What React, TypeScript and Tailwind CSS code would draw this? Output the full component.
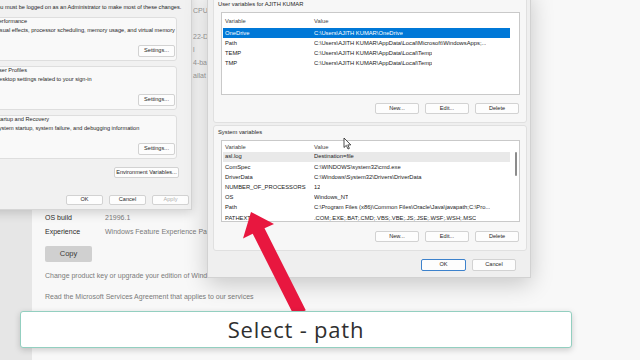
import type { ReactNode } from "react";

const USER_VARS = [
  ["OneDrive", "C:\\Users\\AJITH KUMAR\\OneDrive"],
  ["Path", "C:\\Users\\AJITH KUMAR\\AppData\\Local\\Microsoft\\WindowsApps;..."],
  ["TEMP", "C:\\Users\\AJITH KUMAR\\AppData\\Local\\Temp"],
  ["TMP", "C:\\Users\\AJITH KUMAR\\AppData\\Local\\Temp"],
];

const SYSTEM_VARS = [
  ["asl.log", "Destination=file"],
  ["ComSpec", "C:\\WINDOWS\\system32\\cmd.exe"],
  ["DriverData", "C:\\Windows\\System32\\Drivers\\DriverData"],
  ["NUMBER_OF_PROCESSORS", "12"],
  ["OS", "Windows_NT"],
  ["Path", "C:\\Program Files (x86)\\Common Files\\Oracle\\Java\\javapath;C:\\Pro..."],
  ["PATHEXT", ".COM;.EXE;.BAT;.CMD;.VBS;.VBE;.JS;.JSE;.WSF;.WSH;.MSC"],
];

function WinButton({
  className = "",
  primary = false,
  disabled = false,
  children,
}: {
  className?: string;
  primary?: boolean;
  disabled?: boolean;
  children: ReactNode;
}) {
  return (
    <div
      className={`flex shrink-0 items-center justify-center rounded-[2px] border bg-[#fdfdfd] text-[5.6px] leading-none ${
        primary ? "border-[#3d82cc]" : "border-[#d2d2d2]"
      } ${disabled ? "text-[#b0b0b0]" : "text-[#1f1f1f]"} ${className}`}
    >
      {children}
    </div>
  );
}

function GroupBox({ title, desc }: { title: string; desc: string }) {
  return (
    <div className="ml-[5px] flex h-[44px] w-[187px] flex-col rounded-[3px] border border-[#dedede] bg-[#f9f9f9] pl-[4px] pr-[1px]">
      <div className="h-[6px] whitespace-nowrap text-[5.6px] leading-[6px] text-[#1f1f1f]">{title}</div>
      <div className="mt-[3px] h-[7px] whitespace-nowrap text-[5.6px] leading-[7px] text-[#1f1f1f]">{desc}</div>
      <div className="mt-[11px] flex justify-end">
        <WinButton className="h-[12px] w-[37px]">Settings...</WinButton>
      </div>
    </div>
  );
}

function VarList({
  rows,
  headerClass,
  heightClass,
  selected,
  focused,
  scrollbar,
}: {
  rows: string[][];
  headerClass: string;
  heightClass: string;
  selected: number;
  focused: boolean;
  scrollbar: boolean;
}) {
  return (
    <div className={`ml-[7px] flex w-[299px] overflow-hidden border border-[#c9c9c9] bg-white pl-[1px] pt-[2px] ${heightClass}`}>
      <div className="flex w-[287px] flex-col">
        <div className={`flex items-center pl-[2px] text-[5.8px] text-[#444] ${headerClass}`}>
          <div className="w-[89px]">Variable</div>
          <div>Value</div>
        </div>
        {rows.map(([name, value], i) => (
          <div
            key={name + i}
            className={`flex h-[10.2px] shrink-0 items-center whitespace-nowrap pl-[2px] text-[5.8px] ${
              i === selected
                ? focused
                  ? "bg-[#0078d7] text-white"
                  : "bg-[#e9e9e9] text-[#1a1a1a]"
                : "text-[#1a1a1a]"
            }`}
          >
            <div className="w-[89px] shrink-0">{name}</div>
            <div className="overflow-hidden">{value}</div>
          </div>
        ))}
      </div>
      {scrollbar && (
        <div className="pl-[5px] pt-[9px]">
          <div className="h-[24px] w-[2px] rounded-full bg-[#8c8c8c]" />
        </div>
      )}
    </div>
  );
}

function ListButtons() {
  return (
    <div className="flex justify-end gap-[6px] pr-[7px]">
      <WinButton className="h-[11px] w-[44px]">New...</WinButton>
      <WinButton className="h-[11px] w-[44px]">Edit...</WinButton>
      <WinButton className="h-[11px] w-[44px]">Delete</WinButton>
    </div>
  );
}

export default function App() {
  return (
    <div className="relative flex h-[360px] w-[640px] overflow-hidden bg-[#fbfbfb] font-['Liberation_Sans',Arial,sans-serif]">
      {/* settings page behind the dialogs */}
      <div className="w-[32px] shrink-0 bg-[#e6e6e6]" />
      <div className="flex flex-1 flex-col bg-[#f8f8f8] pl-[13px] pt-[4px]">
        <div className="ml-[148px] flex flex-col text-[7px] leading-[13px] text-[#9a9a9a]">
          <div className="h-[13px]">CPU</div>
          <div className="h-[13px]" />
          <div className="h-[13px]">22-D</div>
          <div className="h-[13px]">l</div>
          <div className="h-[13px]">4-ba</div>
          <div className="h-[13px]">ailat</div>
        </div>
        <div className="mt-[129px] flex flex-col text-[7px]">
          <div className="flex h-[14px] items-center">
            <div className="w-[60px] text-[#2b2b2b]">OS build</div>
            <div className="text-[#7a7a7a]">21996.1</div>
          </div>
          <div className="flex h-[14px] items-center">
            <div className="w-[60px] text-[#2b2b2b]">Experience</div>
            <div className="whitespace-nowrap text-[#7a7a7a]">Windows Feature Experience Pack 321.14700.0.3</div>
          </div>
        </div>
        <div className="mt-[7px] flex h-[16px] w-[47px] items-center justify-center rounded-[2px] bg-[#d0d0d0] text-[7.5px] text-[#3a3a3a]">
          Copy
        </div>
        <div className="mt-[9px] h-[10px] whitespace-nowrap text-[7px] leading-[10px] text-[#7a7a7a]">
          Change product key or upgrade your edition of Windows
        </div>
        <div className="mt-[11px] h-[10px] whitespace-nowrap text-[7px] leading-[10px] text-[#7a7a7a]">
          Read the Microsoft Services Agreement that applies to our services
        </div>
      </div>

      {/* System Properties window */}
      <div className="absolute left-[-16px] top-[-10px] flex h-[220px] w-[208px] flex-col border border-[#d6d6d6] bg-[#f1f1f1] shadow-[0_3px_10px_rgba(0,0,0,0.16)]">
        <div className="mt-[12px] h-[8px] whitespace-nowrap pl-[9px] text-[5.6px] leading-[8px] text-[#1f1f1f]">
          You must be logged on as an Administrator to make most of these changes.
        </div>
        <div className="mt-[6px] flex flex-col gap-[5px]">
          <GroupBox title="Performance" desc="Visual effects, processor scheduling, memory usage, and virtual memory" />
          <GroupBox title="User Profiles" desc="Desktop settings related to your sign-in" />
          <GroupBox title="Startup and Recovery" desc="System startup, system failure, and debugging information" />
        </div>
        <div className="mt-[8px] flex justify-end pr-[12px]">
          <WinButton className="h-[11px] w-[65px]">Environment Variables...</WinButton>
        </div>
        <div className="mt-auto flex h-[22px] items-start justify-end gap-[6px] pr-[2px] pt-[8px]">
          <WinButton className="h-[10px] w-[37px]">OK</WinButton>
          <WinButton className="h-[10px] w-[37px]">Cancel</WinButton>
          <WinButton className="h-[10px] w-[37px]" disabled>
            Apply
          </WinButton>
        </div>
      </div>

      {/* Environment Variables window */}
      <div className="absolute left-[207px] top-[-10px] flex h-[288px] w-[324px] flex-col border border-[#d2d2d2] bg-[#efefef] shadow-[0_6px_22px_rgba(0,0,0,0.2)]">
        <div className="ml-[5px] mt-[3px] flex w-[314px] flex-col rounded-[3px] border border-[#e0e0e0] bg-[#f7f7f7] pb-[8px] pt-[5px]">
          <div className="h-[8px] pl-[4px] text-[5.8px] leading-[8px] text-[#1f1f1f]">User variables for AJITH KUMAR</div>
          <div className="mt-[4px]">
            <VarList rows={USER_VARS} headerClass="h-[13px]" heightClass="h-[83px]" selected={0} focused scrollbar={false} />
          </div>
          <div className="mt-[8px]">
            <ListButtons />
          </div>
        </div>
        <div className="ml-[5px] mt-[2px] flex w-[314px] flex-col rounded-[3px] border border-[#e0e0e0] bg-[#f7f7f7] pb-[8px] pt-[2px]">
          <div className="h-[8px] pl-[4px] text-[5.8px] leading-[8px] text-[#1f1f1f]">System variables</div>
          <div className="mt-[4px]">
            <VarList rows={SYSTEM_VARS} headerClass="h-[12px]" heightClass="h-[82px]" selected={0} focused={false} scrollbar />
          </div>
          <div className="mt-[9px]">
            <ListButtons />
          </div>
        </div>
        <div className="mt-[8px] flex justify-end gap-[6px] pr-[14px]">
          <WinButton className="h-[12px] w-[45px]" primary>
            OK
          </WinButton>
          <WinButton className="h-[12px] w-[44px]">Cancel</WinButton>
        </div>
      </div>

      {/* mouse pointer */}
      <svg className="absolute left-[343px] top-[137px]" width="9" height="13" viewBox="0 0 9 13">
        <path d="M1 1 L1 10.5 L3.3 8.4 L5 12 L6.4 11.4 L4.8 7.9 L7.8 7.9 Z" fill="#fff" stroke="#222" strokeWidth="0.8" strokeLinejoin="round" />
      </svg>

      {/* red pointer arrow */}
      <svg className="pointer-events-none absolute left-0 top-0" width="640" height="360" viewBox="0 0 640 360">
        <polygon
          points="251,212 274,224 264.5,228.3 305.8,310.3 294.2,316 252.7,233.7 243,238.5"
          fill="#e8173f"
        />
      </svg>

      {/* caption */}
      <div className="absolute left-[20px] top-[311px] flex h-[37px] w-[552px] items-center justify-center rounded-[3px] border border-[#93cfc0] bg-white shadow-[0_2px_6px_rgba(0,0,0,0.18)]">
        <span className="font-['Open_Sans',sans-serif] text-[22px] font-medium tracking-[0.8px] text-[#2f2f2f]">Select - path</span>
      </div>
    </div>
  );
}
